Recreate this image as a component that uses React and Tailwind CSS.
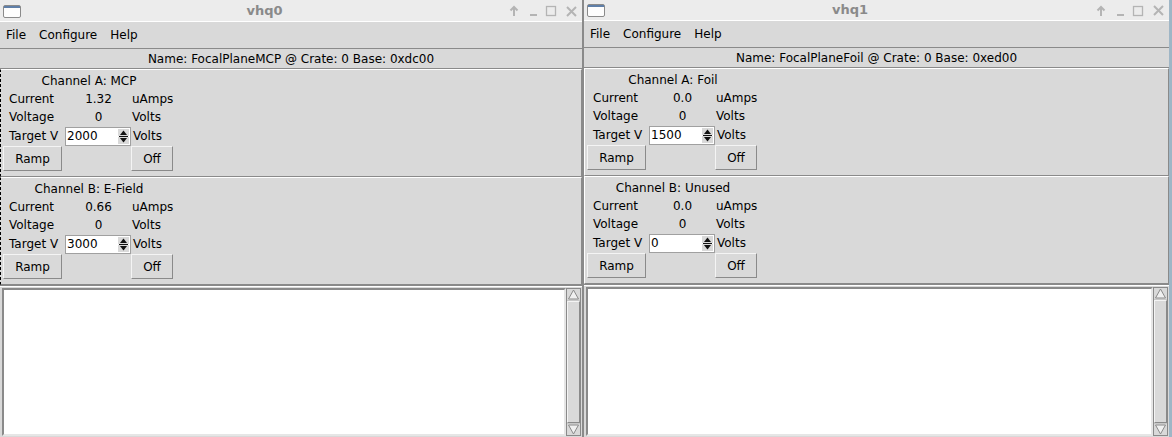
import React from "react";

const font = "font-['DejaVu_Sans',sans-serif]";

function WinIcon() {
  return (
    <svg width="18" height="13" viewBox="0 0 18 13">
      <rect x="0.5" y="0.5" width="17" height="12" rx="1.5" fill="#fdfdfd" stroke="#8a8a8a" />
      <rect x="1" y="1" width="16" height="2" fill="#5f7fa8" />
    </svg>
  );
}

function Controls() {
  const c = "#b4b4b4";
  return (
    <div className="flex items-center gap-[5px]">
      <svg width="12" height="12" viewBox="0 0 12 12">
        <path d="M6 11 V2 M2.5 5.5 L6 2 L9.5 5.5" stroke={c} strokeWidth="2" fill="none" />
      </svg>
      <svg width="12" height="12" viewBox="0 0 12 12" className="ml-[3px]">
        <rect x="2" y="9" width="7" height="2" fill={c} />
      </svg>
      <svg width="12" height="12" viewBox="0 0 12 12">
        <rect x="1.5" y="1.5" width="9" height="9" stroke={c} strokeWidth="1.3" fill="none" />
      </svg>
      <svg width="13" height="13" viewBox="0 0 13 13" className="ml-[3px]">
        <path d="M2 2 L11 11 M11 2 L2 11" stroke={c} strokeWidth="2" />
      </svg>
    </div>
  );
}

function Spinner() {
  return (
    <svg width="11" height="15" viewBox="0 0 11 15">
      <rect x="0" y="0" width="11" height="7" fill="#d9d9d9" />
      <rect x="0" y="8" width="11" height="7" fill="#d9d9d9" />
      <path d="M2 6 L5.5 1.5 L9 6 Z" fill="#111" />
      <rect x="1" y="7" width="9" height="1" fill="#111" />
      <path d="M2 9 L5.5 13.5 L9 9 Z" fill="#111" />
    </svg>
  );
}

function Btn({ children, w }) {
  return (
    <div
      className={`h-[25px] flex items-center justify-center bg-[#d9d9d9] border border-t-[#f4f4f4] border-l-[#f4f4f4] border-r-[#8a8a8a] border-b-[#8a8a8a] ${w}`}
    >
      {children}
    </div>
  );
}

function Channel({ title, current, target, dashed }) {
  return (
    <div
      className={`h-[108px] border-t border-t-white border-b border-b-[#8a8a8a] ${
        dashed ? "border-l border-l-black border-dashed" : "border-l border-l-white"
      } border-r border-r-[#8a8a8a] relative`}
      style={dashed ? { borderTopStyle: "solid", borderBottomStyle: "solid", borderRightStyle: "solid" } : undefined}
    >
      <div className="w-[176px] text-center h-[20px] leading-[16px] pt-[3px]">{title}</div>
      <div className="grid grid-cols-[56px_67px_auto] pl-[8px] w-[200px]">
        <div className="h-[18px] leading-[18px]">Current</div>
        <div className="h-[18px] leading-[18px] text-center">{current}</div>
        <div className="h-[18px] leading-[18px]">uAmps</div>
        <div className="h-[18px] leading-[18px]">Voltage</div>
        <div className="h-[18px] leading-[18px] text-center">0</div>
        <div className="h-[18px] leading-[18px]">Volts</div>
        <div className="h-[20px] leading-[20px]">Target V</div>
        <div className="h-[20px] flex items-center">
          <div className="w-[66px] h-[19px] bg-white border border-[#a0a0a0] flex items-center justify-between pl-[1px] pr-[1px]">
            <span className="leading-[16px]">{target}</span>
            <Spinner />
          </div>
        </div>
        <div className="h-[20px] leading-[20px] pl-[1px]">Volts</div>
      </div>
      <div className="flex pl-[2px]">
        <Btn w="w-[59px]">Ramp</Btn>
        <div className="w-[69px]" />
        <Btn w="w-[42px]">Off</Btn>
      </div>
    </div>
  );
}

function Scrollbar() {
  return (
    <div className="w-[15px] h-full bg-[#c8c8c8] border border-[#8a8a8a] flex flex-col">
      <svg width="13" height="11" viewBox="0 0 13 11">
        <rect width="13" height="11" fill="#d9d9d9" />
        <path d="M1.5 10 L6.5 1 L11.5 10 Z" fill="#f0f0f0" stroke="#8a8a8a" />
      </svg>
      <div className="flex-1 bg-[#d9d9d9] border border-t-[#f4f4f4] border-l-[#f4f4f4] border-r-[#8a8a8a] border-b-[#8a8a8a] my-[1px]" />
      <svg width="13" height="11" viewBox="0 0 13 11">
        <rect width="13" height="11" fill="#d9d9d9" />
        <path d="M1.5 1 L6.5 10 L11.5 1 Z" fill="#f0f0f0" stroke="#8a8a8a" />
      </svg>
    </div>
  );
}

function Window({ title, name, chA, chB, right }) {
  return (
    <div
      className={`flex flex-col h-[437px] shrink-0 bg-[#d9d9d9] ${
        right ? "w-[589px] border-l border-[#8a8a8a] border-r-[3px] border-r-[#9fb6c6]" : "w-[583px] border-r border-[#8a8a8a]"
      }`}
    >
      <div
        className={`${right ? "h-[21px]" : "h-[22px]"} shrink-0 bg-[#ececec] flex items-center border-b border-white relative`}
      >
        <div className="pl-[3px] pt-[1px]">
          <WinIcon />
        </div>
        <div className="flex-1 text-center text-[13px] font-bold text-[#8a8a8a]">{title}</div>
        <div className="pr-[4px] pt-[1px]">
          <Controls />
        </div>
      </div>
      <div className="h-[27px] shrink-0 flex items-start gap-[13px] pl-[6px] pt-[5px] leading-[16px] border-b border-[#8a8a8a]">
        <span>File</span>
        <span>Configure</span>
        <span>Help</span>
      </div>
      <div className="h-[20px] shrink-0 text-center leading-[18px] pt-[1px] border-b border-[#8a8a8a]">{name}</div>
      <div className="shrink-0 border-b border-[#8a8a8a]">
        <Channel {...chA} dashed={!right} />
        <Channel {...chB} dashed={!right} />
      </div>
      <div className="flex-1 flex pt-[1px] pl-[2px] pr-[1px] pb-[1px] min-h-0 border-t border-white">
        <div className="flex-1 bg-white border-2 border-t-[#8a8a8a] border-l-[#8a8a8a] border-r-[#e6e6e6] border-b-[#e6e6e6]" />
        <Scrollbar />
      </div>
    </div>
  );
}

export default function App() {
  return (
    <div className={`${font} text-[12px] text-black w-[1172px] h-[437px] overflow-hidden flex bg-[#d9d9d9]`}>
      <Window
        title="vhq0"
        name="Name: FocalPlaneMCP @ Crate: 0 Base: 0xdc00"
        chA={{ title: "Channel A: MCP", current: "1.32", target: "2000" }}
        chB={{ title: "Channel B: E-Field", current: "0.66", target: "3000" }}
      />
      <Window
        right
        title="vhq1"
        name="Name: FocalPlaneFoil @ Crate: 0 Base: 0xed00"
        chA={{ title: "Channel A: Foil", current: "0.0", target: "1500" }}
        chB={{ title: "Channel B: Unused", current: "0.0", target: "0" }}
      />
    </div>
  );
}
